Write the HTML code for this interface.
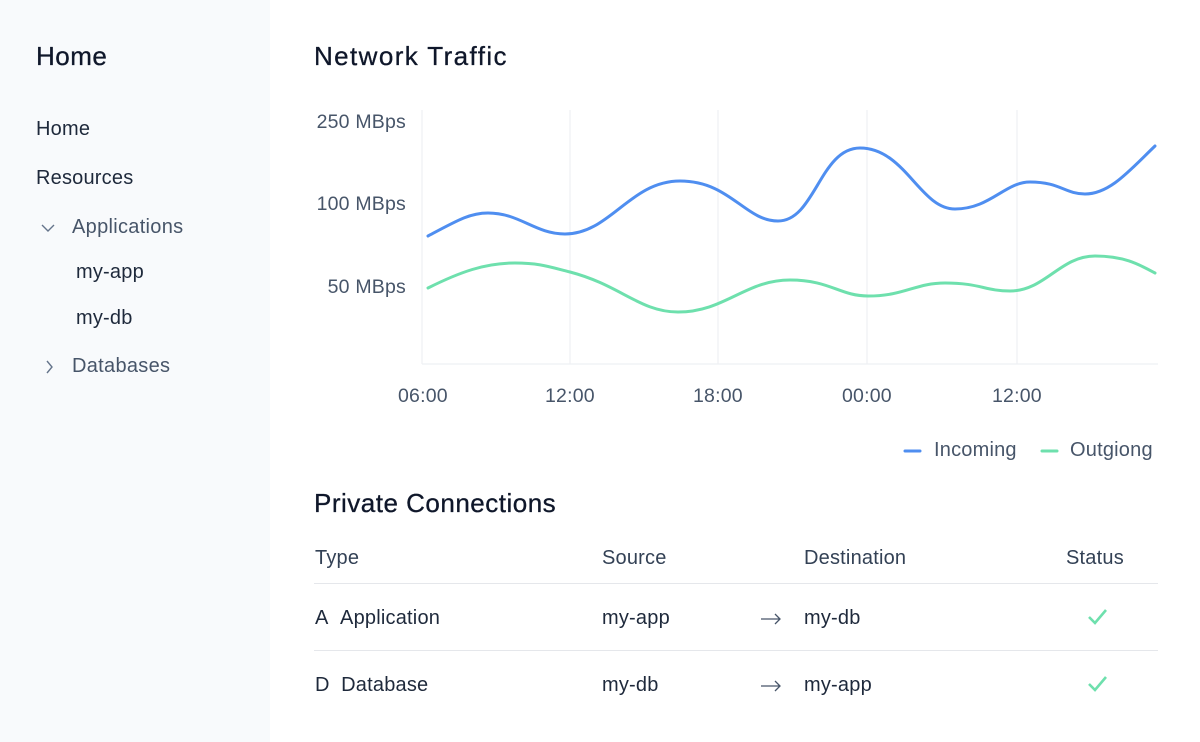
<!DOCTYPE html>
<html><head><meta charset="utf-8"><style>
*{margin:0;padding:0;box-sizing:border-box}
body{width:1200px;height:742px;background:#fff;font-family:"Liberation Sans",sans-serif;position:relative;overflow:hidden;color:#1e293b}
.side{position:absolute;left:0;top:0;width:270px;height:742px;background:#f8fafc}
.t{position:absolute;white-space:nowrap}
.h1{font-size:26px;color:#0f172a;letter-spacing:0.5px;-webkit-text-stroke:0.3px #0f172a}
.nav{font-size:20px;color:#1e293b;letter-spacing:0.2px}
.sub{font-size:20px;color:#475569;letter-spacing:0.3px}
.ax{font-size:19.5px;color:#475569;letter-spacing:0.2px}
.th{font-size:20px;color:#334155;letter-spacing:0.2px}
.td{font-size:20px;color:#1e293b;letter-spacing:0.2px}
.line{position:absolute;left:314px;width:844px;height:1px;background:#e5e7eb}
</style></head><body>
<div class="side"></div>
<div class="t h1" style="left:36px;top:41px">Home</div>
<div class="t nav" style="left:36px;top:118px">Home</div>
<div class="t nav" style="left:36px;top:167px">Resources</div>
<svg class="t" style="left:40px;top:222px" width="16" height="12"><path d="M2 3 L8 9 L14 3" fill="none" stroke="#64748b" stroke-width="1.4"/></svg>
<div class="t sub" style="left:72px;top:216px">Applications</div>
<div class="t nav" style="left:76px;top:261px">my-app</div>
<div class="t nav" style="left:76px;top:307px">my-db</div>
<svg class="t" style="left:44px;top:359px" width="10" height="16"><path d="M3 2 L8 8 L3 14" fill="none" stroke="#64748b" stroke-width="1.4"/></svg>
<div class="t sub" style="left:72px;top:355px">Databases</div>

<div class="t h1" style="left:314px;top:41px;letter-spacing:1.4px">Network Traffic</div>
<div class="t ax" style="left:280px;width:126px;text-align:right;top:111px">250 MBps</div>
<div class="t ax" style="left:280px;width:126px;text-align:right;top:193px">100 MBps</div>
<div class="t ax" style="left:280px;width:126px;text-align:right;top:276px">50 MBps</div>
<svg class="t" style="left:0;top:0" width="1200" height="742">
<g stroke="#eef0f3" stroke-width="1.2">
<line x1="422" y1="110" x2="422" y2="364"/><line x1="570" y1="110" x2="570" y2="364"/><line x1="718" y1="110" x2="718" y2="364"/><line x1="867" y1="110" x2="867" y2="364"/><line x1="1017" y1="110" x2="1017" y2="364"/>
<line x1="422" y1="364" x2="1158" y2="364"/></g>
<path fill="none" stroke="#4f8ef0" stroke-width="3" stroke-linecap="round" d="M428 236 C458 220 470 213 488 213 C520 213 535 234 565 234 C610 234 630 181 680 181 C730 181 745 221 778 221 C815 221 820 148 860 148 C905 148 920 209 955 209 C990 209 1005 182 1030 182 C1060 182 1065 194 1085 194 C1110 194 1130 170 1155 146"/>
<path fill="none" stroke="#6ee0ad" stroke-width="3" stroke-linecap="round" d="M428 288 C460 272 485 263 515 263 C540 263 550 267 570 272 C620 285 640 312 678 312 C725 312 745 280 790 280 C830 280 840 296 868 296 C905 296 915 283 945 283 C980 283 985 291 1010 291 C1045 291 1060 256 1095 256 C1125 256 1140 265 1155 273"/>
<line x1="905" y1="451" x2="920" y2="451" stroke="#4f8ef0" stroke-width="3" stroke-linecap="round"/>
<line x1="1042" y1="451" x2="1057" y2="451" stroke="#6ee0ad" stroke-width="3" stroke-linecap="round"/>
<path d="M1089 617 L1095 623 L1106 610" fill="none" stroke="#6ee0ad" stroke-width="2.6"/>
<path d="M1089 684 L1095 690 L1106 677" fill="none" stroke="#6ee0ad" stroke-width="2.6"/>
<path d="M761 619 H780 M775 614 L780 619 L775 624" fill="none" stroke="#475569" stroke-width="1.3"/>
<path d="M761 686 H780 M775 681 L780 686 L775 691" fill="none" stroke="#475569" stroke-width="1.3"/>
</svg>
<div class="t ax" style="left:398px;top:385px">06:00</div>
<div class="t ax" style="left:545px;top:385px">12:00</div>
<div class="t ax" style="left:693px;top:385px">18:00</div>
<div class="t ax" style="left:842px;top:385px">00:00</div>
<div class="t ax" style="left:992px;top:385px">12:00</div>
<div class="t ax" style="left:934px;top:439px;font-size:20px">Incoming</div>
<div class="t ax" style="left:1070px;top:439px;font-size:20px">Outgiong</div>

<div class="t h1" style="left:314px;top:488px">Private Connections</div>
<div class="t th" style="left:315px;top:547px">Type</div>
<div class="t th" style="left:602px;top:547px">Source</div>
<div class="t th" style="left:804px;top:547px">Destination</div>
<div class="t th" style="left:1066px;top:547px">Status</div>
<div class="line" style="top:583px"></div>
<div class="t td" style="left:315px;top:607px">A&nbsp;&nbsp;Application</div>
<div class="t td" style="left:602px;top:607px">my-app</div>
<div class="t td" style="left:804px;top:607px">my-db</div>
<div class="line" style="top:650px"></div>
<div class="t td" style="left:315px;top:674px">D&nbsp;&nbsp;Database</div>
<div class="t td" style="left:602px;top:674px">my-db</div>
<div class="t td" style="left:804px;top:674px">my-app</div>
</body></html>
